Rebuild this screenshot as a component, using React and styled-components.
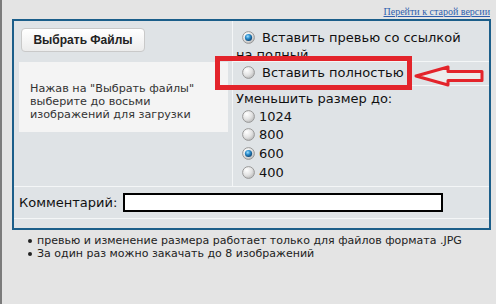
import React, { useId } from "react";
import styled, { createGlobalStyle } from "styled-components";

const Global = createGlobalStyle`
  html, body { margin: 0; padding: 0; background: #e4e4e4; }
  body { font-family: "DejaVu Sans", Verdana, sans-serif; }
`;

const Page = styled.div`
  min-height: 304px;
  box-sizing: border-box;
  border-left: 2px solid #7b7b7b;
  background: #e4e4e4;
`;

const TopBar = styled.div`
  height: 19px;
  display: flex;
  justify-content: flex-end;
  align-items: flex-end;
  padding-right: 6px;
  box-sizing: border-box;
`;

const OldLink = styled.a`
  font-family: "Liberation Serif", "Times New Roman", serif;
  font-size: 10px;
  line-height: 12px;
  color: #2f5fae;
  text-decoration: underline;
  margin-bottom: 1px;
`;

const Panel = styled.div`
  position: relative;
  margin-left: 10px;
  width: 479px;
  box-sizing: border-box;
  border: 2px solid #1b5e8a;
  background: #dfe3e6;
`;

const MainRow = styled.div`
  display: grid;
  grid-template-columns: 219px 1fr;
  height: 165px;
`;

const LeftCell = styled.div`
  border-right: 1px solid #f4f6f7;
  padding: 7px 0 0 5px;
  display: flex;
  flex-direction: column;
  align-items: flex-start;
`;

const PickButton = styled.button`
  margin-left: 2px;
  width: 124px;
  height: 24px;
  border: 1px solid #c9c9c9;
  border-radius: 4px;
  background: linear-gradient(#ffffff, #ececec);
  font-family: "Liberation Sans", Arial, sans-serif;
  font-weight: bold;
  font-size: 12px;
  color: #222;
  padding: 0;
`;

const InfoBox = styled.div`
  margin-top: 10px;
  width: 209px;
  height: 70px;
  box-sizing: border-box;
  background: #f4f4f4;
  padding: 20px 0 0 11px;
  font-size: 11.2px;
  line-height: 13px;
  color: #333;
`;

const RightCell = styled.div`
  display: flex;
  flex-direction: column;
  font-size: 13px;
  color: #111;
`;

const FirstOption = styled.div`
  height: 40px;
  overflow: hidden;
  box-sizing: border-box;
  padding: 8px 24px 0 3px;
  line-height: 17px;
`;

const SecondOption = styled.div`
  height: 25px;
  box-sizing: border-box;
  border-top: 1px solid #f4f6f7;
  border-bottom: 1px solid #f4f6f7;
  padding: 2px 0 0 3px;
  line-height: 17px;
`;

const SizeLabel = styled.div`
  margin-top: 4px;
  padding-left: 3px;
  line-height: 17px;
`;

const SizeOption = styled.div`
  height: 18.67px;
  display: flex;
  align-items: center;
  padding-left: 3px;
`;

const RadioSvg = styled.svg`
  display: inline-block;
  vertical-align: -2px;
  margin-left: 6px;
  margin-right: ${(p) => p.$gap}px;
  flex: none;
`;

function Radio({ checked, gap = 7 }) {
  const id = useId().replace(/:/g, "");
  return (
    <RadioSvg $gap={gap} width="13" height="13" viewBox="0 0 13 13">
      <defs>
        <radialGradient id={`b${id}`} cx="0.35" cy="0.3" r="0.8">
          <stop offset="0" stopColor="#ffffff" />
          <stop offset="0.55" stopColor="#e2e2e2" />
          <stop offset="1" stopColor="#b4b4b4" />
        </radialGradient>
        <radialGradient id={`d${id}`} cx="0.4" cy="0.35" r="0.7">
          <stop offset="0" stopColor="#9fe0ff" />
          <stop offset="0.45" stopColor="#2a8ccc" />
          <stop offset="1" stopColor="#0a3c68" />
        </radialGradient>
      </defs>
      <circle cx="6.5" cy="6.5" r="5.9" fill={`url(#b${id})`} stroke="#999" strokeWidth="1" />
      {checked && <circle cx="6.5" cy="6.5" r="3.6" fill={`url(#d${id})`} />}
    </RadioSvg>
  );
}

const CommentRow = styled.div`
  height: 32px;
  box-sizing: border-box;
  border-top: 1px solid #f4f6f7;
  display: flex;
  align-items: center;
  padding-left: 5px;
  font-size: 13px;
  color: #111;
`;

const CommentInput = styled.input`
  margin-left: 6px;
  width: 320px;
  height: 19px;
  box-sizing: border-box;
  border: 2px solid #000;
  background: #fff;
  padding: 0;
`;

const EmptyRow = styled.div`
  height: 10px;
  box-sizing: border-box;
  border-top: 1px solid #f4f6f7;
`;

const RedBox = styled.div`
  position: absolute;
  left: 201px;
  top: 35px;
  width: 197px;
  height: 34px;
  box-sizing: border-box;
  border: 5px solid #e3242b;
`;

const ArrowSvg = styled.svg`
  position: absolute;
  left: 399px;
  top: 43px;
`;

const Notes = styled.ul`
  list-style: none;
  margin: 4px 0 0 0;
  padding: 0;
  font-size: 11px;
  line-height: 13px;
  color: #222;
`;

const Note = styled.li`
  display: flex;
  align-items: center;
`;

const Bullet = styled.span`
  width: 4px;
  height: 4px;
  border-radius: 50%;
  background: #222;
  margin-left: 26px;
  margin-right: 5px;
  flex: none;
`;

export default function App() {
  return (
    <>
      <Global />
      <Page>
        <TopBar>
          <OldLink href="#">Перейти к старой версии</OldLink>
        </TopBar>
        <Panel>
          <MainRow>
            <LeftCell>
              <PickButton>Выбрать Файлы</PickButton>
              <InfoBox>
                Нажав на "Выбрать файлы"
                <br />
                выберите до восьми
                <br />
                изображений для загрузки
              </InfoBox>
            </LeftCell>
            <RightCell>
              <FirstOption>
                <Radio checked />
                Вставить превью со ссылкой на полный
              </FirstOption>
              <SecondOption>
                <Radio />
                Вставить полностью
              </SecondOption>
              <SizeLabel>Уменьшить размер до:</SizeLabel>
              <SizeOption>
                <Radio gap={4} />
                1024
              </SizeOption>
              <SizeOption>
                <Radio gap={4} />
                800
              </SizeOption>
              <SizeOption>
                <Radio checked gap={4} />
                600
              </SizeOption>
              <SizeOption>
                <Radio gap={4} />
                400
              </SizeOption>
            </RightCell>
          </MainRow>
          <CommentRow>
            Комментарий:
            <CommentInput type="text" />
          </CommentRow>
          <EmptyRow />
          <RedBox />
          <ArrowSvg width="72" height="24" viewBox="0 0 72 24">
            <path
              d="M3 12 L35 3 L35 7.5 L69 7.5 L69 16.5 L35 16.5 L35 21 Z"
              fill="#ececec"
              stroke="#e3242b"
              strokeWidth="3"
              strokeLinejoin="round"
            />
          </ArrowSvg>
        </Panel>
        <Notes>
          <Note>
            <Bullet />
            превью и изменение размера работает только для файлов формата .JPG
          </Note>
          <Note>
            <Bullet />
            За один раз можно закачать до 8 изображений
          </Note>
        </Notes>
      </Page>
    </>
  );
}
